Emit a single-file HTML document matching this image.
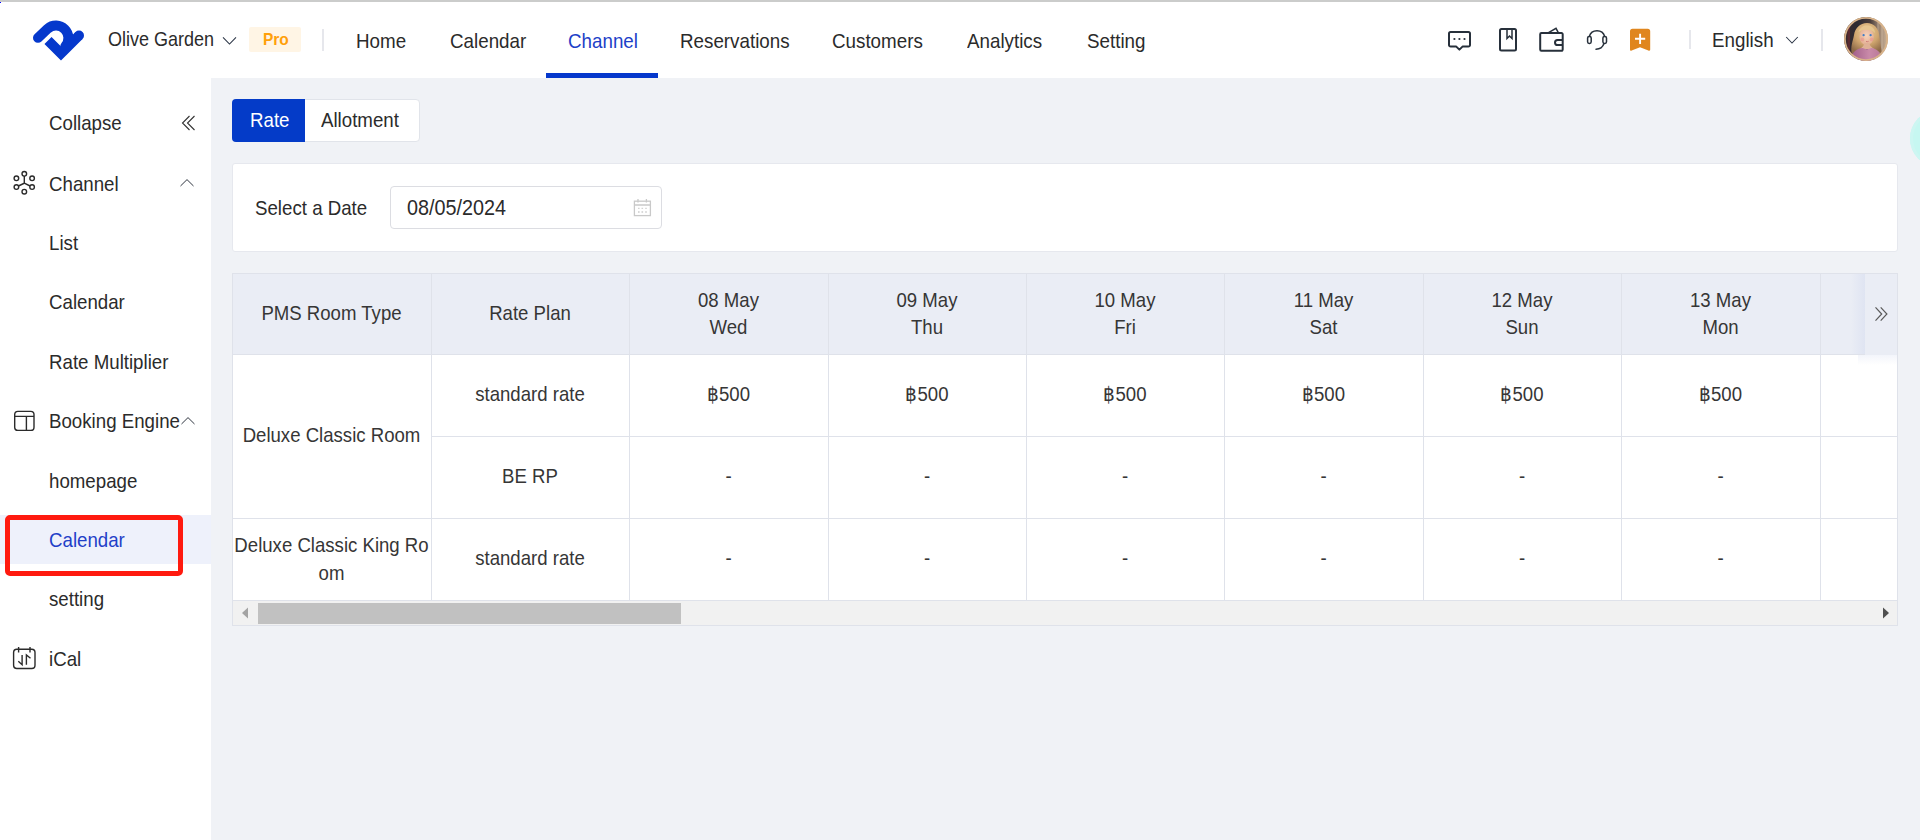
<!DOCTYPE html>
<html><head><meta charset="utf-8">
<style>
*{box-sizing:border-box;margin:0;padding:0}
html,body{width:1920px;height:840px;overflow:hidden;background:#f0f2f6;font-family:"Liberation Sans",sans-serif;color:#2b2b2b}
.a{position:absolute}
.t{position:absolute;white-space:nowrap;font-size:18px;line-height:20px;transform:scaleY(1.08)}
#hdr{left:0;top:0;width:1920px;height:78px;background:#fff}
#topline{left:0;top:0;width:1920px;height:2px;background:#cbcccb}
#side{left:0;top:78px;width:211px;height:762px;background:#fff}
.nav{color:#2b2b2b;font-size:18.8px}
.sep{background:#e6e7ec;width:2px}
.card{background:#fff}
.cell{position:absolute;display:flex;align-items:center;justify-content:center;text-align:center;font-size:18.6px;line-height:27px;color:#363636;transform:translateY(-1.5px) scaleY(1.08)}
.si{font-size:18.7px;color:#2b2b2b}
.mt{font-size:18.7px}
.hl{position:absolute;background:#dfe2ea}
</style></head><body>
<div id="hdr" class="a"></div>
<div id="topline" class="a"></div>
<div class="a" style="left:0;top:2px;width:1px;height:1px;background:#00f"></div>

<!-- logo -->
<svg class="a" style="left:0;top:0" width="100" height="78" viewBox="0 0 100 78">
  <path d="M38 37.8 L47.66 28.66 A12.5 12.5 0 0 1 65.3 46.3" fill="none" stroke="#0538cc" stroke-width="10" stroke-linecap="round"/>
  <path d="M48 40.5 L61 53.5 L79 35.5" fill="none" stroke="#0538cc" stroke-width="10" stroke-linecap="butt" stroke-linejoin="miter"/>
  <circle cx="79" cy="35.5" r="5" fill="#0538cc"/>
</svg>

<div class="t nav" style="left:108px;top:30px;font-size:18px">Olive Garden</div>
<svg class="a" style="left:222px;top:36px" width="16" height="10" viewBox="0 0 16 10"><path d="M1 1.3 L7.5 8 L14 1.3" fill="none" stroke="#2a3445" stroke-width="1.05"/></svg>
<div class="a" style="left:249px;top:27px;width:52px;height:25px;background:#fff5e5;border-radius:2px"></div>
<div class="t" style="left:263px;top:30px;font-size:15.5px;font-weight:700;color:#ffa00a">Pro</div>
<div class="a sep" style="left:322px;top:29px;height:22px"></div>

<div class="t nav" style="left:356px;top:32px">Home</div>
<div class="t nav" style="left:450px;top:32px">Calendar</div>
<div class="t nav" style="left:568px;top:32px;color:#1d3fc8">Channel</div>
<div class="a" style="left:546px;top:73px;width:112px;height:5px;background:#0538cc"></div>
<div class="t nav" style="left:680px;top:32px">Reservations</div>
<div class="t nav" style="left:832px;top:32px">Customers</div>
<div class="t nav" style="left:967px;top:32px">Analytics</div>
<div class="t nav" style="left:1087px;top:32px">Setting</div>

<!-- right header icons placeholder -->

<svg class="a" style="left:1440px;top:20px" width="220" height="40" viewBox="1440 20 220 40">
 <g fill="none" stroke="#27303b" stroke-width="2" stroke-linejoin="round">
  <path d="M1450.6 32 H1468.4 A1.6 1.6 0 0 1 1470 33.6 V45 A1.6 1.6 0 0 1 1468.4 46.6 H1462.5 L1459.4 49.6 L1456.3 46.6 H1450.6 A1.6 1.6 0 0 1 1449 45 V33.6 A1.6 1.6 0 0 1 1450.6 32 Z"/>
  <rect x="1500" y="29" width="16" height="21.4" rx="1.5"/>
  <path d="M1541.4 33 H1561.5 A1.2 1.2 0 0 1 1562.7 34.2 V49.6 A1.2 1.2 0 0 1 1561.5 50.8 H1541.4 A1.2 1.2 0 0 1 1540.2 49.6 V34.2 A1.2 1.2 0 0 1 1541.4 33 Z"/>
  <path d="M1562.7 39.9 H1557.6 A2.6 2.6 0 0 0 1557.6 45.1 H1562.7"/>
 </g>
 <g fill="none" stroke="#27303b" stroke-width="1.5" stroke-linejoin="miter">
  <path d="M1507 29.5 V38.5 L1509.5 36 L1512 38.5 V29.5"/>
  <path d="M1548.5 32.6 L1556 28.3 L1558.3 32.6"/>
  <path d="M1589.3 36.5 A8 8 0 0 1 1604.7 36.5"/>
  <rect x="1587.6" y="36.4" width="3.6" height="7" rx="1.6"/>
  <rect x="1602.9" y="36.4" width="3.6" height="7" rx="1.6"/>
  <path d="M1604 43.6 Q1602 49.3 1596 49.3" stroke-linecap="round"/>
 </g>
 <path d="M1632.5 28.7 H1647.7 A2.5 2.5 0 0 1 1650.2 31.2 V49.4 A1.2 1.2 0 0 1 1648.4 50.5 L1640 47.2 L1631.7 50.5 A1.2 1.2 0 0 1 1630 49.4 V31.2 A2.5 2.5 0 0 1 1632.5 28.7 Z" fill="#e0861e"/>
 <path d="M1635 38.8 H1645.2 M1640.1 33.7 V43.9" stroke="#fff" stroke-width="1.9"/>
 <g fill="#27303b"><circle cx="1454.4" cy="39" r="1.1"/><circle cx="1459.4" cy="39" r="1.1"/><circle cx="1464.5" cy="39" r="1.1"/></g>
</svg>

<div class="a sep" style="left:1689px;top:30px;height:19px;width:1.5px"></div>
<div class="t nav" style="left:1712px;top:31px">English</div>
<svg class="a" style="left:1785px;top:35px" width="14" height="10" viewBox="0 0 14 10"><path d="M1.2 2 L7 8 L12.8 2" fill="none" stroke="#2a3445" stroke-width="1.05"/></svg>
<div class="a sep" style="left:1821px;top:29px;height:22px"></div>
<svg class="a" style="left:1844px;top:17px" width="44" height="44" viewBox="0 0 44 44">
 <defs><clipPath id="cc"><circle cx="22" cy="22" r="22"/></clipPath>
 <linearGradient id="bgg" x1="0" x2="1" y1="0" y2="0"><stop offset="0" stop-color="#3b2b2e"/><stop offset="0.3" stop-color="#2b2a31"/><stop offset="0.6" stop-color="#4a3e3c"/><stop offset="0.8" stop-color="#9c8572"/><stop offset="1" stop-color="#cdb59b"/></linearGradient>
 <radialGradient id="hg" cx="0.5" cy="0.3" r="0.7"><stop offset="0" stop-color="#ecd09a"/><stop offset="0.55" stop-color="#cfa56e"/><stop offset="1" stop-color="#8e6a48"/></radialGradient>
 <radialGradient id="fg" cx="0.5" cy="0.45" r="0.6"><stop offset="0" stop-color="#f6d3bb"/><stop offset="1" stop-color="#e2ab8e"/></radialGradient>
 <linearGradient id="dg" x1="0" x2="1"><stop offset="0" stop-color="#9d5a86"/><stop offset="0.6" stop-color="#c98aa9"/><stop offset="1" stop-color="#b87797"/></linearGradient>
 </defs>
 <g clip-path="url(#cc)">
  <rect width="44" height="44" fill="url(#bgg)"/>
  <rect x="3.5" y="8" width="2.5" height="30" fill="#5a2a30"/>
  <path d="M34 0 V44 M38 0 V44" stroke="#e0cdb5" stroke-width="1" opacity="0.5"/>
  <path d="M8 37 C6 30 9 24 10 18 C11 11 16 6 23 6 C30 6 34 11 35 17 C36 24 37 30 38 37 C35 35 32 33 30 32 L16 32 C14 33 11 35 8 37 Z" fill="url(#hg)"/>
  <ellipse cx="22.6" cy="19.5" rx="7.2" ry="8.6" fill="url(#fg)"/>
  <path d="M14.5 15 C16 9.5 21 8 24 8.5 C28 9 31 12 31 16 C28 12.5 19 11.5 14.5 15 Z" fill="#e6c690"/>
  <path d="M16 32 C18 30 20 29 20.3 26 H25.3 C25.6 29 28 30 30 32 Z" fill="#e0b196"/>
  <circle cx="19.6" cy="18.2" r="1.15" fill="#3f7ec8"/><circle cx="26.6" cy="18.2" r="1.15" fill="#3f7ec8"/>
  <circle cx="18.4" cy="22.4" r="1.9" fill="#e78f8b" opacity="0.55"/><circle cx="27.6" cy="22.4" r="1.9" fill="#e78f8b" opacity="0.55"/>
  <path d="M22 24.4 Q23.3 25 24.6 24.4" stroke="#c97070" stroke-width="0.8" fill="none"/>
  <path d="M6 44 C7 36 12 31.5 19 31 C21 32.5 25 32.5 27 31 C33 31.5 37 35 38 44 Z" fill="url(#dg)"/>
  </g>
 <circle cx="22" cy="22" r="21.1" fill="none" stroke="#d8b38a" stroke-width="1.8"/>
</svg>

<!-- sidebar -->
<div id="side" class="a"></div>

<div class="t si" style="left:49px;top:114px">Collapse</div>
<svg class="a" style="left:180px;top:114px" width="16" height="18" viewBox="0 0 16 18"><path d="M9.5 2 L2.5 9 L9.5 16 M14.5 2 L7.5 9 L14.5 16" fill="none" stroke="#333" stroke-width="1.1"/></svg>

<svg class="a" style="left:10px;top:168px" width="30" height="30" viewBox="0 0 30 30">
 <g fill="none" stroke="#2b2b2b" stroke-width="1.4">
  <circle cx="14.3" cy="5.8" r="2.3"/><circle cx="6.4" cy="10.3" r="2.3"/><circle cx="22.1" cy="10.3" r="2.3"/>
  <circle cx="6.4" cy="19.1" r="2.3"/><circle cx="22.1" cy="19.1" r="2.3"/><circle cx="14.3" cy="23.7" r="2.3"/>
  <path d="M14.3 8.1 V15.2 L8.4 18 M14.3 15.2 L20.1 18"/>
 </g></svg>
<div class="t si" style="left:49px;top:175px">Channel</div>
<svg class="a" style="left:178px;top:176px" width="18" height="12" viewBox="0 0 18 12"><path d="M2.5 10 L9 3.6 L15.5 10" fill="none" stroke="#2f3540" stroke-width="1"/></svg>

<div class="t si" style="left:49px;top:234px">List</div>
<div class="t si" style="left:49px;top:293px">Calendar</div>
<div class="t si" style="left:49px;top:353px">Rate Multiplier</div>

<svg class="a" style="left:10px;top:408px" width="30" height="26" viewBox="0 0 30 26">
 <g fill="none" stroke="#2b2b2b" stroke-width="1.4">
  <rect x="4.7" y="3.4" width="19.3" height="19" rx="3.2"/>
  <path d="M4.7 8.4 H24 M16.4 8.4 V22.4"/>
 </g></svg>
<div class="t si" style="left:49px;top:412px">Booking Engine</div>
<svg class="a" style="left:178.5px;top:414px" width="18" height="12" viewBox="0 0 18 12"><path d="M2.5 10 L9 3.6 L15.5 10" fill="none" stroke="#2f3540" stroke-width="1"/></svg>

<div class="t si" style="left:49px;top:472px">homepage</div>
<div class="a" style="left:0;top:515px;width:211px;height:49px;background:#eef1fb"></div>
<div class="t si" style="left:49px;top:531px;color:#1f40c8">Calendar</div>
<div class="a" style="left:5px;top:515px;width:178px;height:61px;border:5px solid #ff1a0f;border-radius:5px"></div>
<div class="t si" style="left:49px;top:590px">setting</div>

<svg class="a" style="left:8px;top:642px" width="32" height="32" viewBox="0 0 32 32">
 <g fill="none" stroke="#2b2b2b" stroke-width="1.4">
  <rect x="5.6" y="7.2" width="21.4" height="19.3" rx="3.2"/>
  <path d="M10.6 5 V10.5 M22 5 V10.5 M14.1 13 V22.7 L10.3 19.3 M18.4 22.7 V13 L22.5 16.2"/>
 </g></svg>
<div class="t si" style="left:49px;top:650px">iCal</div>


<!-- main -->

<!-- tabs -->
<div class="a" style="left:232px;top:99px;width:188px;height:43px;background:#fff;border:1px solid #e1e4ea;border-radius:4px"></div>
<div class="a" style="left:232px;top:99px;width:73px;height:43px;background:#043bc8;border-radius:4px 0 0 4px"></div>
<div class="t mt" style="left:250px;top:111px;color:#fff">Rate</div>
<div class="t mt" style="left:321px;top:111px">Allotment</div>

<!-- card -->
<div class="a" style="left:232px;top:163px;width:1666px;height:89px;background:#fff;border:1px solid #e6e8ee;border-radius:3px"></div>
<div class="t mt" style="left:255px;top:199px">Select a Date</div>
<div class="a" style="left:390px;top:186px;width:272px;height:43px;border:1px solid #dcdde2;border-radius:4px;background:#fff"></div>
<div class="t mt" style="left:407px;top:197px;font-size:19.8px">08/05/2024</div>
<svg class="a" style="left:630px;top:196px" width="24" height="24" viewBox="0 0 24 24">
 <g fill="none" stroke="#c9c9c9" stroke-width="1.3">
  <rect x="4.4" y="5.2" width="16" height="14.4"/>
  <path d="M4.4 9 H20.4 M8 3 V6.5 M16.4 3 V6.5"/>
 </g>
 <g fill="#c9c9c9"><rect x="8" y="11.8" width="1.6" height="1"/><rect x="11.5" y="11.8" width="1.6" height="1"/><rect x="15.2" y="11.8" width="1.6" height="1"/>
 <rect x="8" y="15.3" width="1.6" height="1.4"/><rect x="11.5" y="15.3" width="1.6" height="1.4"/><rect x="15.2" y="15.3" width="1.6" height="1.4"/></g>
</svg>

<!-- table -->
<div class="a" style="left:232px;top:273px;width:1666px;height:353px;background:#fff;border:1px solid #dfe2ea"></div>
<div class="a" style="left:233px;top:274px;width:1664px;height:80px;background:#eaedf5"></div>

<div class="hl" style="left:233px;top:354px;width:1664px;height:1px"></div>
<div class="hl" style="left:431px;top:436px;width:1466px;height:1px"></div>
<div class="hl" style="left:233px;top:518px;width:1664px;height:1px"></div>
<div class="hl" style="left:233px;top:600px;width:1664px;height:1px"></div>
<div class="hl" style="left:431px;top:274px;width:1px;height:326px"></div>
<div class="hl" style="left:629px;top:274px;width:1px;height:326px"></div>
<div class="hl" style="left:828px;top:274px;width:1px;height:326px"></div>
<div class="hl" style="left:1026px;top:274px;width:1px;height:326px"></div>
<div class="hl" style="left:1224px;top:274px;width:1px;height:326px"></div>
<div class="hl" style="left:1423px;top:274px;width:1px;height:326px"></div>
<div class="hl" style="left:1621px;top:274px;width:1px;height:326px"></div>
<div class="hl" style="left:1820px;top:274px;width:1px;height:326px"></div>
<div class="cell" style="left:232px;top:274px;width:199px;height:80px">PMS Room Type</div>
<div class="cell" style="left:431px;top:274px;width:198px;height:80px">Rate Plan</div>
<div class="cell" style="left:629px;top:276px;width:199px;height:80px;line-height:24.8px">08 May<br>Wed</div>
<div class="cell" style="left:828px;top:276px;width:198px;height:80px;line-height:24.8px">09 May<br>Thu</div>
<div class="cell" style="left:1026px;top:276px;width:198px;height:80px;line-height:24.8px">10 May<br>Fri</div>
<div class="cell" style="left:1224px;top:276px;width:199px;height:80px;line-height:24.8px">11 May<br>Sat</div>
<div class="cell" style="left:1423px;top:276px;width:198px;height:80px;line-height:24.8px">12 May<br>Sun</div>
<div class="cell" style="left:1621px;top:276px;width:199px;height:80px;line-height:24.8px">13 May<br>Mon</div>
<div class="cell" style="left:232px;top:355px;width:199px;height:163px">Deluxe Classic Room</div>
<div class="cell" style="left:232px;top:520px;width:199px;height:81px;line-height:25.4px">Deluxe Classic King Ro<br>om</div>
<div class="cell" style="left:431px;top:355px;width:198px;height:81px">standard rate</div>
<div class="cell" style="left:431px;top:437px;width:198px;height:81px">BE RP</div>
<div class="cell" style="left:431px;top:519px;width:198px;height:81px">standard rate</div>
<div class="cell" style="left:629px;top:355px;width:199px;height:81px">&#3647;500</div>
<div class="cell" style="left:629px;top:437px;width:199px;height:81px">-</div>
<div class="cell" style="left:629px;top:519px;width:199px;height:81px">-</div>
<div class="cell" style="left:828px;top:355px;width:198px;height:81px">&#3647;500</div>
<div class="cell" style="left:828px;top:437px;width:198px;height:81px">-</div>
<div class="cell" style="left:828px;top:519px;width:198px;height:81px">-</div>
<div class="cell" style="left:1026px;top:355px;width:198px;height:81px">&#3647;500</div>
<div class="cell" style="left:1026px;top:437px;width:198px;height:81px">-</div>
<div class="cell" style="left:1026px;top:519px;width:198px;height:81px">-</div>
<div class="cell" style="left:1224px;top:355px;width:199px;height:81px">&#3647;500</div>
<div class="cell" style="left:1224px;top:437px;width:199px;height:81px">-</div>
<div class="cell" style="left:1224px;top:519px;width:199px;height:81px">-</div>
<div class="cell" style="left:1423px;top:355px;width:198px;height:81px">&#3647;500</div>
<div class="cell" style="left:1423px;top:437px;width:198px;height:81px">-</div>
<div class="cell" style="left:1423px;top:519px;width:198px;height:81px">-</div>
<div class="cell" style="left:1621px;top:355px;width:199px;height:81px">&#3647;500</div>
<div class="cell" style="left:1621px;top:437px;width:199px;height:81px">-</div>
<div class="cell" style="left:1621px;top:519px;width:199px;height:81px">-</div>

<div class="a" style="left:1851px;top:274px;width:14px;height:80px;background:linear-gradient(to right,rgba(214,220,238,0),rgba(214,221,240,0.55))"></div>
<div class="a" style="left:1865px;top:274px;width:32px;height:81px;background:#eaedf5"></div>
<div class="a" style="left:1858px;top:355px;width:39px;height:10px;background:linear-gradient(to bottom,rgba(228,232,245,0.45),rgba(255,255,255,0))"></div>
<svg class="a" style="left:1872px;top:305px" width="18" height="18" viewBox="0 0 18 18"><path d="M3.5 2.3 L9.7 9 L3.5 15.7 M8.7 2.3 L14.9 9 L8.7 15.7" fill="none" stroke="#5a5a5a" stroke-width="1.2"/></svg>

<!-- scrollbar -->
<div class="a" style="left:233px;top:601px;width:1664px;height:24px;background:#f1f1f1"></div>
<div class="a" style="left:258px;top:603px;width:423px;height:21px;background:#c1c1c1"></div>
<svg class="a" style="left:240px;top:606px" width="10" height="14" viewBox="0 0 10 14"><path d="M8 1.5 V12.5 L2 7 Z" fill="#a3a3a3"/></svg>
<svg class="a" style="left:1881px;top:606px" width="10" height="14" viewBox="0 0 10 14"><path d="M2 1.5 V12.5 L8 7 Z" fill="#505050"/></svg>

<!-- floating circle -->
<div class="a" style="left:1909.5px;top:109.5px;width:57px;height:57px;border-radius:50%;background:#c6f7f1;box-shadow:inset 0 0 0 3px #cdf6f2"></div>


</body></html>
